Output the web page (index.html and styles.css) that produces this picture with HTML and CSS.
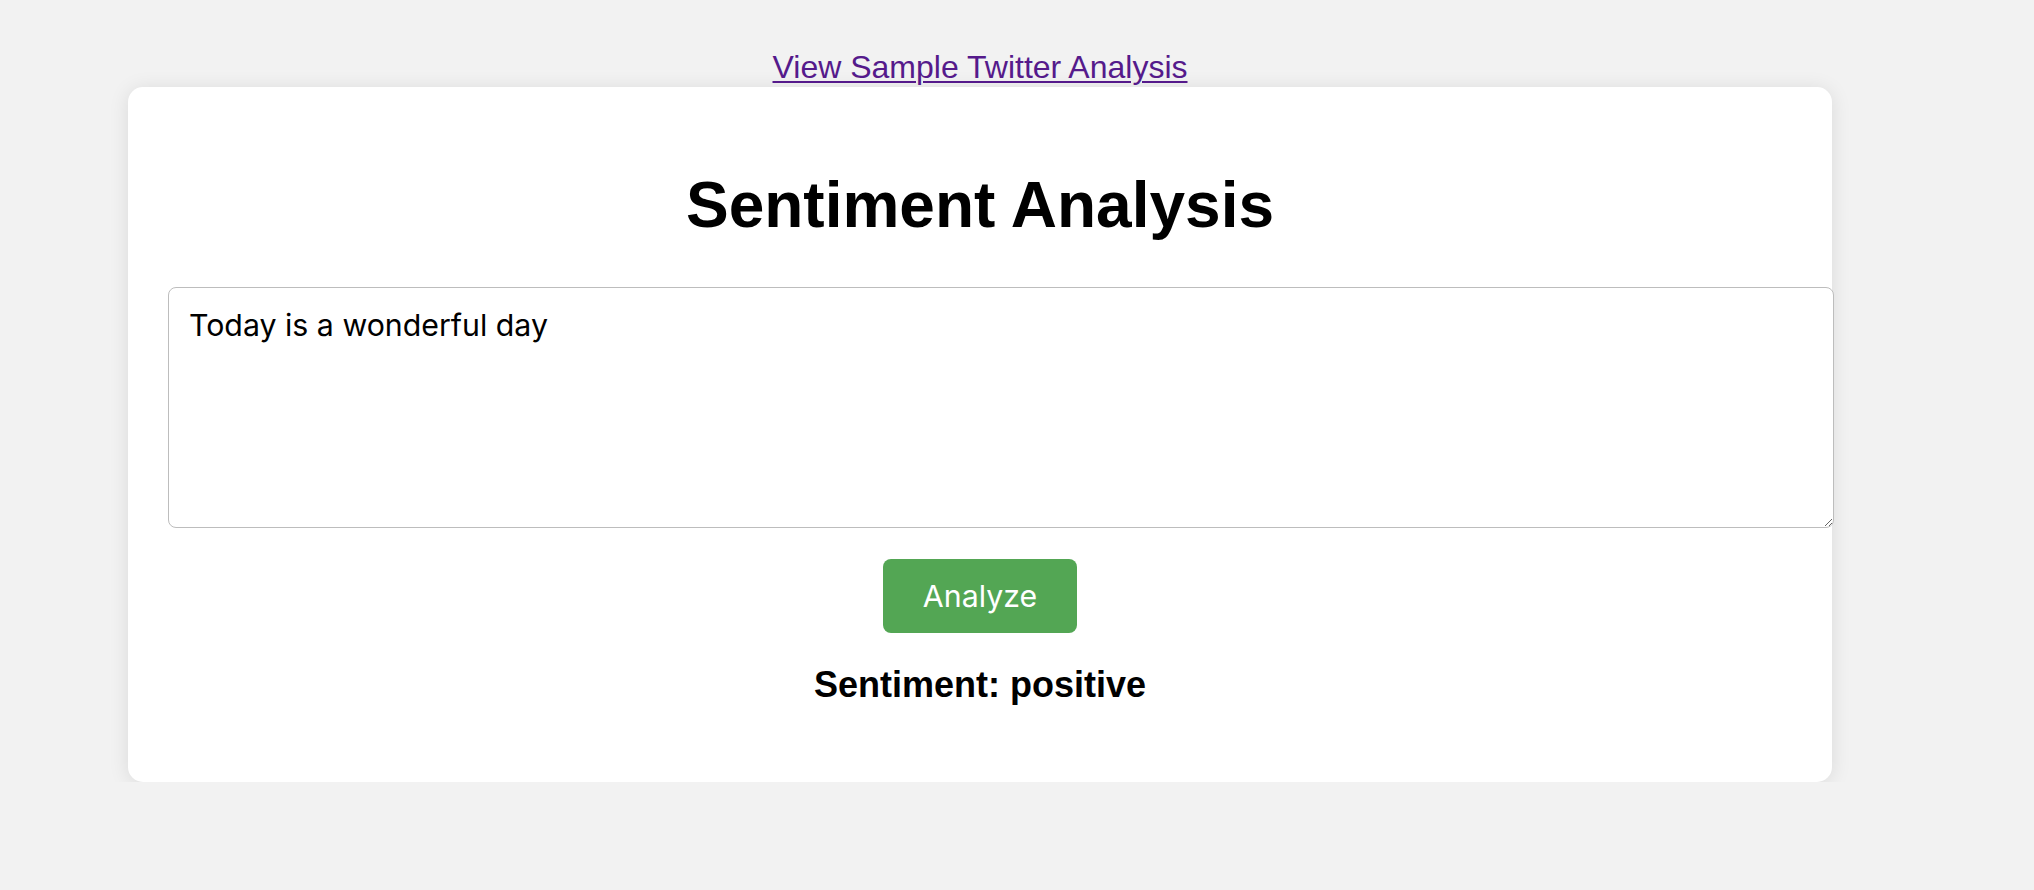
FILE: index.html
```html
<!DOCTYPE html>
<html lang="en">
<head>
<meta charset="utf-8">
<title>Sentiment Analysis</title>
<link rel="stylesheet" href="styles.css">
</head>
<body>
<div class="page">
  <div class="top-link"><a href="#" class="sample-link">View Sample Twitter Analysis</a></div>
  <div class="card">
    <h1 class="title">Sentiment Analysis</h1>
    <textarea class="input" spellcheck="false">Today is a wonderful day</textarea>
    <div class="actions"><button class="analyze-btn" type="button">Analyze</button></div>
    <h3 class="result">Sentiment: positive</h3>
  </div>
</div>
</body>
</html>
```

FILE: styles.css
```css
html, body {
  margin: 0;
  padding: 0;
  background: #f2f2f2;
}

.page {
  width: 1704px;
  margin-left: 128px;
  padding-top: 49px;
  font-family: "Liberation Sans", Arial, sans-serif;
}

.top-link {
  text-align: center;
  font-size: 32px;
  line-height: 37px;
  margin-bottom: 1px;
}

.sample-link {
  color: #551a8b;
  text-decoration: underline;
  text-underline-offset: 3px;
  text-decoration-thickness: 2px;
}

.card {
  background: #ffffff;
  border-radius: 15px;
  padding: 40px;
  box-shadow: 0 2px 20px rgba(0, 0, 0, 0.1);
  display: flex;
  flex-direction: column;
}

.title {
  font-family: "Liberation Sans", Arial, sans-serif;
  font-size: 64px;
  font-weight: bold;
  line-height: 74px;
  text-align: center;
  margin: 41px 0 45px;
  color: #000;
}

.input {
  display: block;
  box-sizing: border-box;
  width: 1666px;
  height: 241px;
  padding: 19px 20px;
  border: 1px solid #bdbdbd;
  border-radius: 8px;
  font-family: Inter, "Noto Sans", sans-serif;
  font-size: 30.3px;
  color: #000;
  background: #fff;
  outline: none;
  resize: both;
  margin: 0;
}

.actions {
  display: flex;
  justify-content: center;
  margin-top: 31px;
}

.analyze-btn {
  background: #53a654;
  color: #fff;
  border: none;
  border-radius: 8px;
  font-family: Inter, "Noto Sans", sans-serif;
  font-size: 30.3px;
  line-height: 38px;
  padding: 18px 40px;
  cursor: pointer;
}

.result {
  font-family: "Liberation Sans", Arial, sans-serif;
  font-size: 36px;
  font-weight: bold;
  line-height: 41px;
  text-align: center;
  margin: 31px 0 37px;
  color: #000;
}
```
